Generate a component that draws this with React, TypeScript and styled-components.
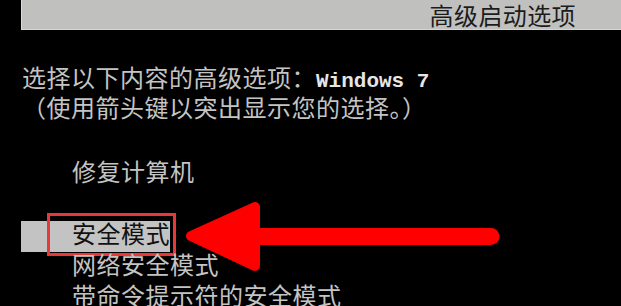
import React from "react";
import styled, { createGlobalStyle } from "styled-components";

const GlobalStyle = createGlobalStyle`
  html, body {
    margin: 0;
    padding: 0;
    background: #000;
  }
`;

const options = [
  { label: "修复计算机", selected: false },
  { label: "", selected: false },
  { label: "安全模式", selected: true },
  { label: "网络安全模式", selected: false },
  { label: "带命令提示符的安全模式", selected: false },
];

const BigArrow = () => (
  <ArrowSvg width="340" height="100" viewBox="0 0 340 100">
    <polygon
      points="10,55 74,26 74,85"
      fill="#ff0000"
      stroke="#ff0000"
      strokeWidth="10"
      strokeLinejoin="round"
    />
    <line
      x1="70"
      y1="55.5"
      x2="310"
      y2="55.5"
      stroke="#ff0000"
      strokeWidth="17"
      strokeLinecap="round"
    />
  </ArrowSvg>
);

const App = () => {
  return (
    <Screen>
      <GlobalStyle />
      <TitleBar>
        <Title>高级启动选项</Title>
      </TitleBar>
      <Prompt>
        <Line>
          选择以下内容的高级选项：<Latin>Windows 7</Latin>
        </Line>
        <Line>（使用箭头键以突出显示您的选择。）</Line>
      </Prompt>
      <Menu>
        {options.map((item, i) => (
          <Row key={i} selected={item.selected}>
            {item.label}
            {item.selected && (
              <>
                <Highlight />
                <BigArrow />
              </>
            )}
          </Row>
        ))}
      </Menu>
    </Screen>
  );
};

const Screen = styled.div`
  width: 621px;
  height: 306px;
  overflow: hidden;
  background: #000;
  padding-left: 21px;
  box-sizing: border-box;
  font-family: "Noto Sans CJK SC", "Noto Sans", sans-serif;
  color: #c4c4c4;
`;

const TitleBar = styled.div`
  height: 30px;
  display: flex;
  align-items: center;
  justify-content: flex-end;
  padding-right: 45px;
  background: #c0c1bf;
  border-left: 1px solid #dcdcdc;
  border-bottom: 1px solid #d6d6d6;
  box-sizing: border-box;
`;

const Title = styled.span`
  font-size: 24px;
  line-height: 28px;
  color: #1c1c1c;
  letter-spacing: 0.4px;
`;

const Prompt = styled.div`
  margin-top: 34px;
  padding-left: 1px;
`;

const Line = styled.div`
  font-size: 24px;
  line-height: 25px;
  letter-spacing: 0.5px;
  white-space: nowrap;
`;

const Latin = styled.span`
  font-family: "Liberation Mono", monospace;
  font-size: 21px;
  font-weight: bold;
  letter-spacing: 0;
  color: #e6e6e6;
`;

const Menu = styled.div`
  margin-top: 40px;
  display: flex;
  flex-direction: column;
`;

const Row = styled.div<{ selected: boolean }>`
  position: relative;
  height: 31px;
  width: ${({ selected }) => (selected ? "149px" : "auto")};
  padding-left: 51px;
  box-sizing: border-box;
  font-size: 24px;
  line-height: 24px;
  letter-spacing: 0.5px;
  white-space: nowrap;
  background: ${({ selected }) => (selected ? "#c3c3c3" : "transparent")};
  color: ${({ selected }) => (selected ? "#111" : "#c4c4c4")};
`;

const Highlight = styled.div`
  position: absolute;
  left: 26px;
  top: -8px;
  width: 129px;
  height: 43px;
  border: 3px solid #e8383a;
  box-sizing: border-box;
`;

const ArrowSvg = styled.svg`
  position: absolute;
  left: 160px;
  top: -40px;
  overflow: visible;
`;

export default App;
